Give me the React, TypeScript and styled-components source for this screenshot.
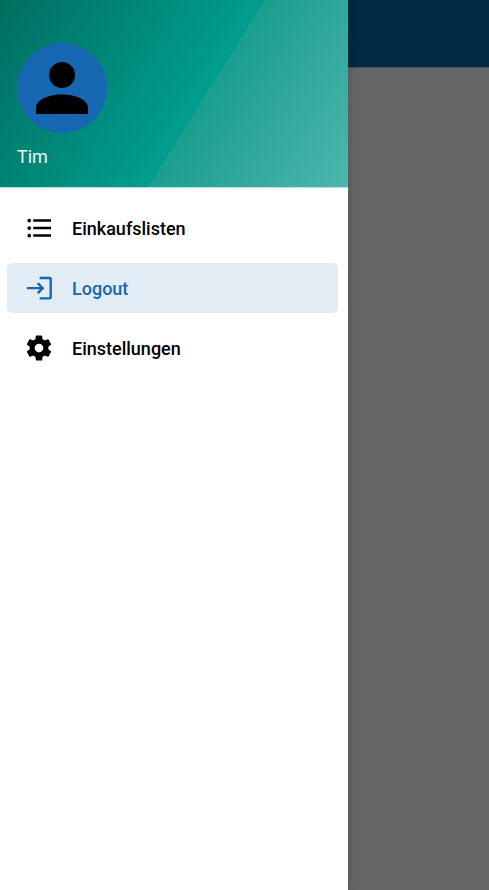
import React from "react";
import styled, { createGlobalStyle } from "styled-components";

const GlobalStyle = createGlobalStyle`
  *, *::before, *::after { box-sizing: border-box; }
  html, body, #root { height: 100%; }
  body {
    margin: 0;
    background: #666666;
    font-family: Roboto, "Noto Sans", sans-serif;
  }
`;

const Screen = styled.div`
  display: grid;
  grid-template-columns: minmax(0, 348fr) minmax(0, 141fr);
  min-height: 100%;
`;

const Drawer = styled.aside`
  display: flex;
  flex-direction: column;
  background: #ffffff;
  box-shadow: 0 0 12px rgba(0, 0, 0, 0.2);
  z-index: 1;
`;

const Profile = styled.header`
  display: flex;
  flex-direction: column;
  align-items: flex-start;
  gap: 12px;
  padding: 43px 17px 18px;
  background: linear-gradient(122deg, #006e5f 0%, #009e8e 57%, #1a9e8f 57%, #4db6ac 100%);
  border-bottom: 1px solid #b9dfdb;
`;

const Avatar = styled.div`
  display: grid;
  place-items: center;
  width: 90px;
  height: 90px;
  border-radius: 50%;
  background: #1667b2;
  color: #000000;
`;

const UserName = styled.span`
  color: #e9f6f4;
  font-size: 18px;
  line-height: 24px;
`;

const Menu = styled.nav`
  display: flex;
  flex-direction: column;
  gap: 10px;
  padding: 15px 10px 15px 7px;
`;

const MenuItem = styled.a<{ $active?: boolean }>`
  display: flex;
  align-items: center;
  gap: 18px;
  height: 50px;
  padding: 0 17px;
  border-radius: 5px;
  background: ${({ $active }) => ($active ? "#e2ecf5" : "transparent")};
  color: ${({ $active }) => ($active ? "#1667b2" : "#000000")};
  font-size: 18px;
  font-weight: 500;
  line-height: 24px;
  text-decoration: none;
`;

const Label = styled.span`
  padding-top: 2px;
`;

const Icon = styled.svg<{ $size: number }>`
  display: block;
  flex: none;
  width: ${({ $size }) => $size}px;
  height: ${({ $size }) => $size}px;
  fill: currentColor;
`;

const Backdrop = styled.main`
  background: #666666;
`;

const AppBar = styled.div`
  height: 68px;
  background: #002a45;
  border-bottom: 1px solid #44535f;
`;

const paths = {
  account:
    "M12,4A4,4 0 0,1 16,8A4,4 0 0,1 12,12A4,4 0 0,1 8,8A4,4 0 0,1 12,4M12,14C16.42,14 20,15.79 20,18V20H4V18C4,15.79 7.58,14 12,14Z",
  list:
    "M7.4,5H21.6V7H7.4V5M7.4,13V11H21.6V13H7.4M4.2,4.5A1.5,1.5 0 0,1 5.7,6A1.5,1.5 0 0,1 4.2,7.5A1.5,1.5 0 0,1 2.7,6A1.5,1.5 0 0,1 4.2,4.5M4.2,10.5A1.5,1.5 0 0,1 5.7,12A1.5,1.5 0 0,1 4.2,13.5A1.5,1.5 0 0,1 2.7,12A1.5,1.5 0 0,1 4.2,10.5M7.4,19V17H21.6V19H7.4M4.2,16.5A1.5,1.5 0 0,1 5.7,18A1.5,1.5 0 0,1 4.2,19.5A1.5,1.5 0 0,1 2.7,18A1.5,1.5 0 0,1 4.2,16.5Z",
  login:
    "M12.5,3H20.5A1.8,1.8 0 0,1 22.3,4.8V19.4A1.8,1.8 0 0,1 20.5,21.2H12.5V19.4H20.4V4.9H12.5V3M11.7,7.4L16.3,12.1L11.7,16.8L10.3,15.4L12.7,13H2.3V11.2H12.7L10.3,8.8L11.7,7.4Z",
  cog:
    "M12,15.5A3.5,3.5 0 0,1 8.5,12A3.5,3.5 0 0,1 12,8.5A3.5,3.5 0 0,1 15.5,12A3.5,3.5 0 0,1 12,15.5M19.43,12.97C19.47,12.65 19.5,12.33 19.5,12C19.5,11.67 19.47,11.34 19.43,11L21.54,9.37C21.73,9.22 21.78,8.95 21.66,8.73L19.66,5.27C19.54,5.05 19.27,4.96 19.05,5.05L16.56,6.05C16.04,5.66 15.5,5.32 14.87,5.07L14.5,2.42C14.46,2.18 14.25,2 14,2H10C9.75,2 9.54,2.18 9.5,2.42L9.13,5.07C8.5,5.32 7.96,5.66 7.44,6.05L4.95,5.05C4.73,4.96 4.46,5.05 4.34,5.27L2.34,8.73C2.21,8.95 2.27,9.22 2.46,9.37L4.57,11C4.53,11.34 4.5,11.67 4.5,12C4.5,12.33 4.53,12.65 4.57,12.97L2.46,14.63C2.27,14.78 2.21,15.05 2.34,15.27L4.34,18.73C4.46,18.95 4.73,19.03 4.95,18.95L7.44,17.94C7.96,18.34 8.5,18.68 9.13,18.93L9.5,21.58C9.54,21.82 9.75,22 10,22H14C14.25,22 14.46,21.82 14.5,21.58L14.87,18.93C15.5,18.67 16.04,18.34 16.56,17.94L19.05,18.95C19.27,19.03 19.54,18.95 19.66,18.73L21.66,15.27C21.78,15.05 21.73,14.78 21.54,14.63L19.43,12.97Z",
};

type Glyph = keyof typeof paths;

function Symbol({ name, size = 30 }: { name: Glyph; size?: number }) {
  return (
    <Icon viewBox="0 0 24 24" $size={size} aria-hidden="true">
      <path d={paths[name]} />
    </Icon>
  );
}

const entries: { label: string; icon: Glyph; active?: boolean }[] = [
  { label: "Einkaufslisten", icon: "list" },
  { label: "Logout", icon: "login", active: true },
  { label: "Einstellungen", icon: "cog" },
];

export default function App() {
  return (
    <>
      <GlobalStyle />
      <Screen>
        <Drawer>
          <Profile>
            <Avatar>
              <Symbol name="account" size={78} />
            </Avatar>
            <UserName>Tim</UserName>
          </Profile>
          <Menu>
            {entries.map(({ label, icon, active }) => (
              <MenuItem
                key={label}
                href="#"
                $active={active}
                aria-current={active ? "page" : undefined}
              >
                <Symbol name={icon} />
                <Label>{label}</Label>
              </MenuItem>
            ))}
          </Menu>
        </Drawer>
        <Backdrop>
          <AppBar />
        </Backdrop>
      </Screen>
    </>
  );
}
